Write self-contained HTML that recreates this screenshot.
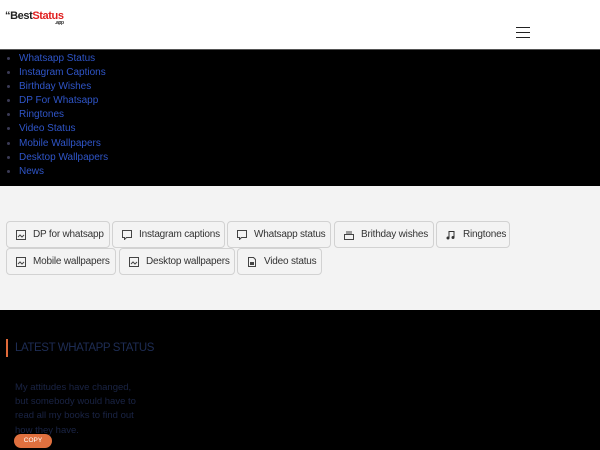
<!DOCTYPE html>
<html><head><style>
*{margin:0;padding:0;box-sizing:border-box}
body{width:600px;height:450px;overflow:hidden;font-family:"Liberation Sans",sans-serif;background:#000}
.hdr{height:50px;background:#fff;border-bottom:1px solid #555;position:relative}
.logo{position:absolute;left:5px;top:10px;font-weight:bold;font-size:11px;letter-spacing:-0.4px}
.logo .b{color:#222}.logo .s{color:#e02020}
.logo small{position:absolute;left:50px;top:10px;font-size:5px;color:#333}
.ham{position:absolute;left:516px;top:27px;width:14px}
.ham i{display:block;height:1.3px;background:#222;margin-bottom:3.7px}
ul{background:#000;padding:2px 0 0 19px;height:136px;list-style:disc;color:#334}
li{font-size:10px;line-height:14.1px;color:#2f55c8}
li::marker{color:#3a3a55}
.gray{background:#f3f3f3;height:124px;position:relative}
.btn{position:absolute;height:27px;border:1px solid #d2d2d2;border-radius:4px;background:#f3f3f3;font-size:10px;color:#333;line-height:26px;padding-left:26px;letter-spacing:-0.2px}
.btn svg{position:absolute;left:9px;top:8px}
.sec{background:#000;height:140px;position:relative}
.bar{position:absolute;left:6px;top:29px;width:2px;height:18px;background:#e06a3a}
h2{position:absolute;left:15px;top:32px;font-size:11.5px;font-weight:normal;color:#1e2d55;letter-spacing:-0.4px}
p{position:absolute;left:15px;top:71px;width:125px;font-size:9.5px;line-height:14.2px;color:#1a2445}
.copy{position:absolute;left:14px;top:124px;width:38px;height:14px;border-radius:7px;background:#e0703f;color:#fff;font-size:6.5px;text-align:center;line-height:14px}
</style></head><body>
<div class="hdr"><div class="logo"><span class="b">“Best</span><span class="s">Status</span><small>.app</small></div>
<div class="ham"><i></i><i></i><i></i></div></div>
<ul><li>Whatsapp Status</li><li>Instagram Captions</li><li>Birthday Wishes</li><li>DP For Whatsapp</li><li>Ringtones</li><li>Video Status</li><li>Mobile Wallpapers</li><li>Desktop Wallpapers</li><li>News</li></ul>
<div class="gray">
<div class="btn" style="left:6px;top:35px;width:104px"><svg width="10" height="10"><rect x=".5" y=".5" width="9" height="9" fill="none" stroke="#444"/><path d="M2 7l2-2 2 2 2-2" stroke="#444" fill="none"/></svg>DP for whatsapp</div>
<div class="btn" style="left:112px;top:35px;width:113px"><svg width="10" height="10"><path d="M.5.5h9v7h-5l-2 2v-2h-2z" stroke="#444" fill="none"/></svg>Instagram captions</div>
<div class="btn" style="left:227px;top:35px;width:104px"><svg width="10" height="10"><path d="M.5.5h9v7h-5l-2 2v-2h-2z" stroke="#444" fill="none"/></svg>Whatsapp status</div>
<div class="btn" style="left:334px;top:35px;width:100px"><svg width="10" height="10"><rect x=".5" y="4.5" width="9" height="5" fill="none" stroke="#444"/><path d="M3 1v3M5 1v3M7 1v3" stroke="#444"/></svg>Brithday wishes</div>
<div class="btn" style="left:436px;top:35px;width:74px"><svg width="10" height="10"><path d="M3 8V1.5h5V7" stroke="#333" fill="none"/><circle cx="2" cy="8" r="1.5" fill="#333"/><circle cx="7" cy="7.5" r="1.5" fill="#333"/></svg>Ringtones</div>
<div class="btn" style="left:6px;top:62px;width:110px"><svg width="10" height="10"><rect x=".5" y=".5" width="9" height="9" fill="none" stroke="#444"/><path d="M2 7l2-2 2 2 2-2" stroke="#444" fill="none"/></svg>Mobile wallpapers</div>
<div class="btn" style="left:119px;top:62px;width:116px"><svg width="10" height="10"><rect x=".5" y=".5" width="9" height="9" fill="none" stroke="#444"/><path d="M2 7l2-2 2 2 2-2" stroke="#444" fill="none"/></svg>Desktop wallpapers</div>
<div class="btn" style="left:237px;top:62px;width:85px"><svg width="10" height="10"><path d="M1.5.5h5l2 2v7h-7z" stroke="#444" fill="none"/><rect x="3" y="5" width="4" height="3" fill="#444"/></svg>Video status</div>
</div>
<div class="sec"><div class="bar"></div><h2>LATEST WHATAPP STATUS</h2>
<p>My attitudes have changed, but somebody would have to read all my books to find out how they have.</p>
<div class="copy">COPY</div></div>
</body></html>
